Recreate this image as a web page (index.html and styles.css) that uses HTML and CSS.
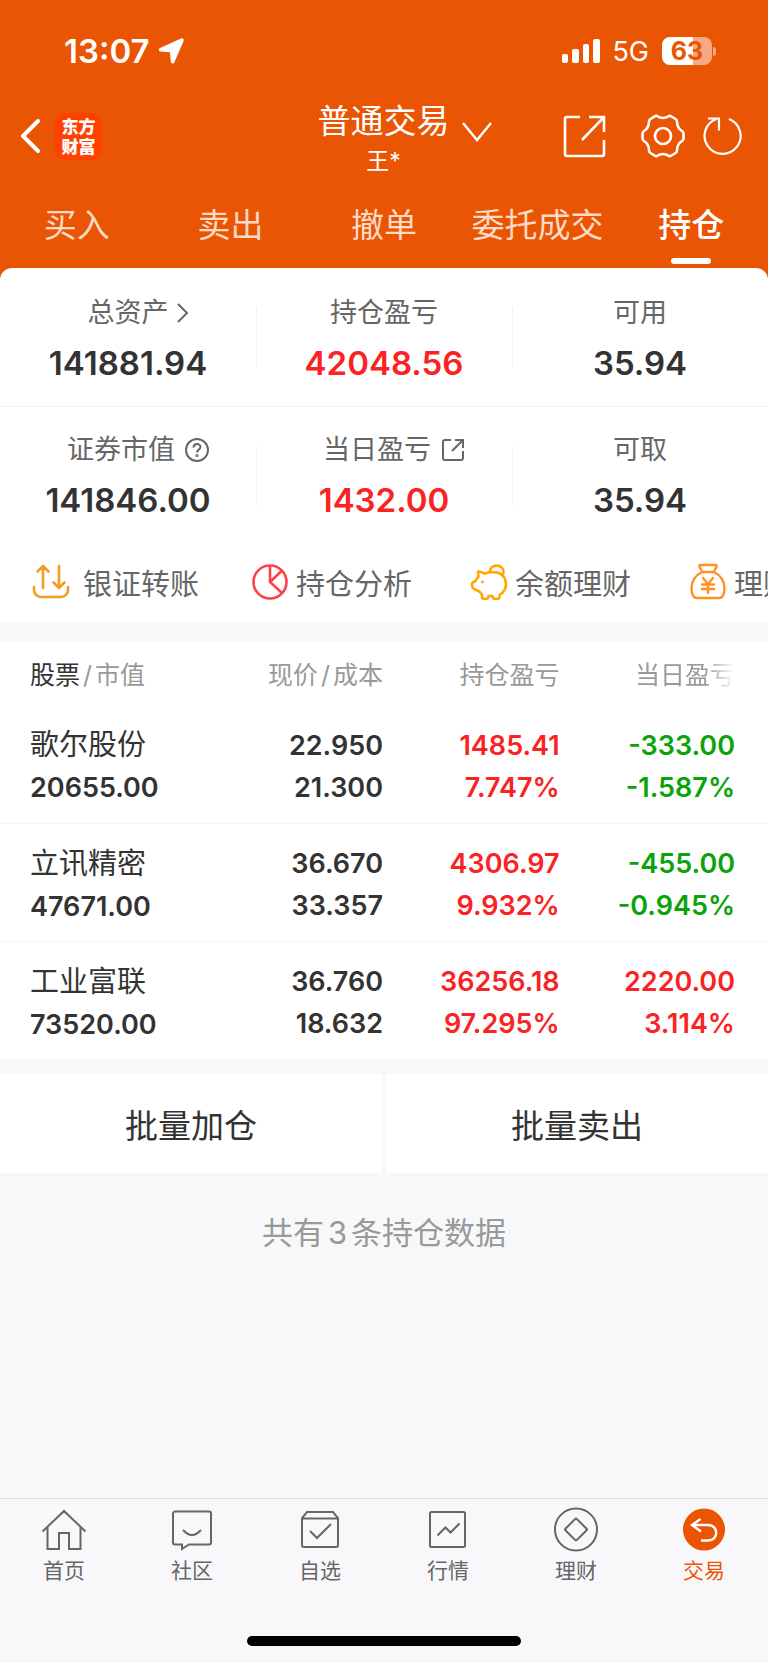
FILE: index.html
```html
<!DOCTYPE html>
<html lang="zh-CN">
<head>
    <meta charset="UTF-8">
    <meta name="viewport" content="width=device-width, initial-scale=1.0">
    <title>普通交易 - 持仓</title>
    <link rel="stylesheet" href="styles.css">
</head>
<body>
    <header class="header">
        <div class="status">
            <span class="status-time">13:07</span>
            <svg class="status-location" width="28" height="28" viewBox="0 0 28 28"><path d="M24 1.500 3 11c-1.800.9-1.400 3.500.7 3.600l8.300.6c.8 0 1 .4 1.100 1l.7 8.400c.2 2.200 2.800 2.500 3.600.6L26.600 4c.7-1.800-.8-3.200-2.600-2.500z" fill="#fff"/></svg>
            <svg class="status-signal" width="40" height="26" viewBox="0 0 40 26" fill="#fff">
                <rect x="1" y="16" width="6" height="9" rx="2"/>
                <rect x="11" y="11" width="7" height="14" rx="2"/>
                <rect x="22" y="6" width="6" height="19" rx="2"/>
                <rect x="32" y="1" width="7" height="24" rx="2"/>
            </svg>
            <span class="status-network">5G</span>
            <span class="battery">63</span>
            <span class="battery-tip"></span>
        </div>

        <div class="titlebar">
            <div class="titlebar-left">
                <button class="icon-button" aria-label="返回">
                    <svg width="22" height="38" viewBox="0 0 22 38"><path d="M18 4 3 19l15 15" fill="none" stroke="#fff" stroke-width="4" stroke-linecap="round" stroke-linejoin="round"/></svg>
                </button>
                <span class="logo">东方<br>财富</span>
            </div>
            <button class="account">
                <span class="account-name">普通交易</span>
                <svg class="account-arrow" width="30" height="20" viewBox="0 0 30 20"><path d="m1 1 14 17L29 1" fill="none" stroke="#fff" stroke-width="2.400"/></svg>
                <span class="account-user">王*</span>
            </button>
            <div class="titlebar-right">
                <button class="icon-button share" aria-label="分享">
                    <svg width="44" height="44" viewBox="0 0 44 44" fill="none" stroke="#fff" stroke-width="2.600"><path d="M18 3H5a2 2 0 0 0-2 2v35a2 2 0 0 0 2 2h35a2 2 0 0 0 2-2V26M27 3h15v15M42 3 20 26"/></svg>
                </button>
                <button class="icon-button" aria-label="设置">
                    <svg width="44" height="44" viewBox="0 0 44 44" fill="none" stroke="#fff" stroke-width="2.600" stroke-linejoin="round"><circle cx="22" cy="22" r="8"/><path d="M13.500 2.500Q15 1.500 16 2q6 4 12 0 1-.5 2.500.5l4 2.500q1.500 1 1.500 2.500 0 6.500 5 9.500 1.500 1 1.500 2.500v5q0 1.500-1.500 2.500-5 3-5 9.500 0 1.500-1.500 2.500l-4 2.500q-1.500 1-2.500.5-6-4-12 0-1 .5-2.500-.5L9.500 39Q8 38 8 36.500 8 30 3 27q-1.500-1-1.500-2.500v-5Q1.500 18 3 17q5-3 5-9.500Q8 6 9.500 5z"/></svg>
                </button>
                <button class="icon-button" aria-label="刷新">
                    <svg width="44" height="44" viewBox="0 0 44 44" fill="none" stroke="#fff" stroke-width="2.200"><path d="M26 5a18 18 0 1 1-12-.300M5 4.500h11v12"/></svg>
                </button>
            </div>
        </div>

        <nav class="tabs">
            <a class="tab" href="#buy">买入</a>
            <a class="tab" href="#sell">卖出</a>
            <a class="tab" href="#cancel">撤单</a>
            <a class="tab" href="#orders">委托成交</a>
            <a class="tab tab-active" href="#positions">持仓</a>
        </nav>
    </header>

    <main>
        <section class="summary">
            <div class="stats">
                <div class="stat">
                    <button class="stat-label stat-link">总资产<svg class="more" width="13" height="20" viewBox="0 0 13 20"><path d="m2 1 9 9-9 9" fill="none" stroke="#666" stroke-width="2"/></svg></button>
                    <span class="stat-value">141881.94</span>
                </div>
                <div class="stat">
                    <span class="stat-label">持仓盈亏</span>
                    <span class="stat-value up">42048.56</span>
                </div>
                <div class="stat">
                    <span class="stat-label">可用</span>
                    <span class="stat-value">35.94</span>
                </div>
            </div>
            <div class="stats">
                <div class="stat">
                    <button class="stat-label stat-link">证券市值<svg width="24" height="24" viewBox="0 0 24 24" fill="none" stroke="#666" stroke-width="2"><circle cx="12" cy="12" r="11"/><path d="M8.500 9.500c0-4.500 7-4.500 7-.5 0 2.500-3.500 2.700-3.500 5.500"/><circle cx="12" cy="17.500" r=".6"/></svg></button>
                    <span class="stat-value">141846.00</span>
                </div>
                <div class="stat">
                    <button class="stat-label stat-link">当日盈亏<svg width="24" height="24" viewBox="0 0 24 24" fill="none" stroke="#666" stroke-width="2"><path d="M10 2H4a2 2 0 0 0-2 2v16a2 2 0 0 0 2 2h16a2 2 0 0 0 2-2v-7M14 2h8v8M22 2 11 13"/></svg></button>
                    <span class="stat-value up">1432.00</span>
                </div>
                <div class="stat">
                    <span class="stat-label">可取</span>
                    <span class="stat-value">35.94</span>
                </div>
            </div>
            <nav class="shortcuts">
                <a class="shortcut shortcut-transfer" href="#transfer">
                    <svg width="38" height="38" viewBox="0 0 38 38" fill="none" stroke="#f59a23" stroke-width="2.600" stroke-linecap="round" stroke-linejoin="round"><path d="M2 24v3a7 7 0 0 0 7 7h20a7 7 0 0 0 7-7v-3M11 25V3M5.500 8.500 11 3l5.500 5.500M27 3v22M21.500 19.500 27 25l5.500-5.500"/></svg>
                    银证转账
                </a>
                <a class="shortcut" href="#analysis">
                    <svg width="38" height="38" viewBox="0 0 38 38" fill="none" stroke="#ff4046" stroke-width="2.600"><circle cx="19" cy="19" r="16.500"/><path d="M19 2.500V19l12 11M19 19 31 7.500"/></svg>
                    持仓分析
                </a>
                <a class="shortcut" href="#balance">
                    <svg width="38" height="38" viewBox="0 0 38 38" fill="none" stroke="#ffa800" stroke-width="2.600" stroke-linejoin="round"><path d="M8 8.500c3-.3 5 1 6.500 2.200 2-1.200 4-1.500 7-1.500h4C32 9.500 36 15 36 21c0 5-2.500 8.500-6.500 11v2c0 1-.6 1.800-2 1.800h-3c-1.500 0-2-1-2-2.800h-4c0 1.800-.5 2.800-2 2.800h-2.500c-1.400 0-2-.8-2-1.800v-2.500l-2.500-3L4 26c-1.500-1-2-2-2-4v-1c0-1 .5-1.500 1.500-2l2-1c.8-1.500 1.500-3 3-4.200z"/><path d="M20 9c0-9 14-8 13.500 0 0 2-.6 3.500-1.700 4.600"/><circle cx="12.500" cy="19" r="1" fill="#ffa800" stroke-width="1"/></svg>
                    余额理财
                </a>
                <a class="shortcut" href="#wealth">
                    <svg width="38" height="38" viewBox="0 0 38 38" fill="none" stroke="#ff9120" stroke-width="2.400" stroke-linecap="round" stroke-linejoin="round"><path d="M11.500 2h15c1 0 1.500.8 1 1.600L25 9c6 3 10.500 9 10.500 16.500 0 2.500-.5 5-1.500 7-.8 1.800-2 2.500-4 2.500H8c-2 0-3.200-.7-4-2.500-1-2-1.500-4.500-1.500-7C2.500 18 7 12 13 9l-2.500-5.400C10 2.800 10.500 2 11.500 2zM13 9h12"/><path d="m14 15 5 6 5-6M13 21.500h12M13 26h12M19 21v9"/></svg>
                    理财产品
                </a>
            </nav>
        </section>

        <table class="positions">
            <thead>
                <tr>
                    <th><b>股票</b><i>/</i>市值</th>
                    <th>现价<i>/</i>成本</th>
                    <th>持仓盈亏</th>
                    <th><span class="fade">当日盈亏</span></th>
                </tr>
            </thead>
            <tbody>
                <tr>
                    <td><span class="stock">歌尔股份</span><br>20655.00</td>
                    <td>22.950<br>21.300</td>
                    <td class="up">1485.41<br>7.747%</td>
                    <td class="down">-333.00<br>-1.587%</td>
                </tr>
                <tr>
                    <td><span class="stock">立讯精密</span><br>47671.00</td>
                    <td>36.670<br>33.357</td>
                    <td class="up">4306.97<br>9.932%</td>
                    <td class="down">-455.00<br>-0.945%</td>
                </tr>
                <tr>
                    <td><span class="stock">工业富联</span><br>73520.00</td>
                    <td>36.760<br>18.632</td>
                    <td class="up">36256.18<br>97.295%</td>
                    <td class="up">2220.00<br>3.114%</td>
                </tr>
            </tbody>
        </table>

        <div class="batch">
            <button class="batch-button">批量加仓</button>
            <button class="batch-button">批量卖出</button>
        </div>

        <p class="count">共有<span class="count-number">3</span>条持仓数据</p>
    </main>

    <footer class="footer">
        <nav class="tabbar">
            <a class="tabbar-item" href="#home">
                <svg width="46" height="46" viewBox="0 0 46 46"><path d="M1.500 24.500 23 4l21.500 20.500M6.500 20v22h11.500V26h10v16h11.500V20"/></svg>
                首页
            </a>
            <a class="tabbar-item" href="#community">
                <svg width="46" height="46" viewBox="0 0 46 46"><path d="M6 4.500h34a2 2 0 0 1 2 2v29a2 2 0 0 1-2 2H20L13 42v-4.500H6a2 2 0 0 1-2-2v-29a2 2 0 0 1 2-2zM14 23q9 10 18 0"/></svg>
                社区
            </a>
            <a class="tabbar-item" href="#watchlist">
                <svg width="46" height="46" viewBox="0 0 46 46"><path d="M5 11.500h36V38a2 2 0 0 1-2 2H7a2 2 0 0 1-2-2V11l5-6h26l5 6v1M13 24l7 7 14-14"/></svg>
                自选
            </a>
            <a class="tabbar-item" href="#quotes">
                <svg width="46" height="46" viewBox="0 0 46 46"><rect x="5" y="5" width="35" height="35" rx="1.500"/><path d="m12.500 28.500 8-8 5 5 9-9"/></svg>
                行情
            </a>
            <a class="tabbar-item" href="#finance">
                <svg width="46" height="46" viewBox="0 0 46 46"><circle cx="23" cy="22.500" r="21"/><rect x="15" y="14.500" width="16" height="16" rx="1" transform="rotate(45 23 22.500)"/></svg>
                理财
            </a>
            <a class="tabbar-item tabbar-active" href="#trade">
                <svg width="46" height="46" viewBox="0 0 46 46"><circle class="disc" cx="23" cy="22.500" r="21"/><path d="M19.500 12 11 18l9 6.500M11 18h16c11 0 11 15.500 0 15.500h-7"/></svg>
                交易
            </a>
        </nav>
        <div class="home-indicator"></div>
    </footer>
</body>
</html>
```

FILE: styles.css
```css
* { box-sizing: border-box; }

body {
    margin: 0;
    min-height: 100vh;
    display: flex;
    flex-direction: column;
    background: #f7f8fa;
    color: #333;
    font-family: "Inter", "Noto Sans CJK SC", sans-serif;
    overflow-x: hidden;
}

main { flex: 1; }

a { color: inherit; text-decoration: none; }

button {
    margin: 0;
    padding: 0;
    border: none;
    background: none;
    color: inherit;
    font: inherit;
    cursor: pointer;
}

svg { display: block; flex: none; }

.up { color: #fa2323; }
.down { color: #0aa30a; }

/* header */
.header {
    padding-bottom: 12px;
    background: #ea5504;
    color: #fff;
}

.status {
    display: flex;
    align-items: center;
    height: 96px;
    padding: 6px 52px 0 64px;
}
.status-time {
    font-size: 33px;
    font-weight: 600;
}
.status-location { margin-left: 7px; }
.status-signal { margin-left: auto; }
.status-network {
    margin: 0 13px 0 11px;
    font-size: 27px;
}
.battery {
    width: 50px;
    height: 28px;
    border-radius: 8px;
    background: linear-gradient(to right, #fff 63%, #f5aa82 63%);
    color: #ea5504;
    font-size: 25px;
    font-weight: 700;
    line-height: 28px;
    text-align: center;
}
.battery-tip {
    width: 3px;
    height: 9px;
    margin-left: 1px;
    border-radius: 0 4px 4px 0;
    background: #f5aa82;
}

.titlebar {
    display: grid;
    grid-template-columns: 1fr auto 1fr;
    grid-template-rows: 80px;
    align-items: center;
    padding: 0 21px 0 20px;
}
.titlebar-left,
.titlebar-right {
    display: flex;
    align-items: center;
}
.titlebar-left { gap: 13px; }
.titlebar-right {
    justify-content: flex-end;
    gap: 18px;
}
.share { margin-right: 17px; }
.logo {
    width: 47px;
    height: 47px;
    padding-top: 3px;
    border-radius: 10px;
    background: #ff4100;
    font-family: "Noto Sans CJK SC", sans-serif;
    font-size: 17px;
    font-weight: 900;
    line-height: 20px;
    text-align: center;
}

.account {
    display: grid;
    grid-template-columns: 30px auto 30px;
    column-gap: 12px;
    align-items: center;
    padding-top: 5px;
}
.account-name {
    grid-column: 2;
    font-size: 33px;
    line-height: 44px;
}
.account-arrow {
    grid-column: 3;
    margin-top: 22px;
}
.account-user {
    grid-column: 2;
    font-size: 23px;
    line-height: 36px;
}

.tabs {
    display: grid;
    grid-template-columns: repeat(5, 1fr);
    padding-top: 25px;
}
.tab {
    height: 67px;
    color: #fddac6;
    font-size: 33px;
    line-height: 48px;
    text-align: center;
}
.tab-active {
    color: #fff;
    font-weight: 500;
}
.tab-active::after {
    content: "";
    display: block;
    width: 40px;
    height: 6px;
    margin: 9px auto 0;
    border-radius: 3px;
    background: #fff;
}

/* account summary */
.summary {
    margin-top: -12px;
    border-radius: 12px 12px 0 0;
    background: #fff;
    overflow: hidden;
}
.stats {
    display: grid;
    grid-template-columns: repeat(3, 1fr);
    height: 138px;
}
.stats + .stats { border-top: 1px solid #f2f2f2; }
.stat {
    display: flex;
    flex-direction: column;
    align-items: center;
    padding-top: 27px;
}
.stats + .stats .stat { padding-top: 25px; }
.stat + .stat { background: linear-gradient(#f2f2f2, #f2f2f2) no-repeat left 39px / 1px 60px; }
.stat-label {
    display: flex;
    align-items: center;
    gap: 10px;
    color: #666;
    font-size: 27px;
    line-height: 36px;
}
.stat-link { padding-left: 20px; }
.more { margin-left: -3px; }
.stat-value {
    margin-top: 12px;
    font-size: 33px;
    font-weight: 600;
    line-height: 40px;
}

.shortcuts {
    display: flex;
    height: 78px;
    padding: 0 0 2px 32px;
    overflow: hidden;
}
.shortcut {
    display: flex;
    flex: 0 0 219px;
    align-items: center;
    gap: 7px;
    color: #666;
    font-size: 29px;
    white-space: nowrap;
}
.shortcut-transfer { gap: 13px; }

/* positions */
.positions {
    width: 100%;
    margin-top: 20px;
    border-collapse: collapse;
    table-layout: fixed;
    background: #fff;
}
.positions th,
.positions td {
    padding: 0 1px 0 0;
    text-align: right;
}
.positions th {
    width: 23%;
    height: 63px;
    padding-bottom: 1px;
    color: #999;
    font-size: 25px;
    font-weight: 400;
}
.positions th:first-child { width: 26%; }
.positions th:last-child { width: 27%; }
.positions th:nth-child(2) { width: 24%; }
.positions th b {
    color: #333;
    font-weight: 400;
}
.positions th i {
    margin: 0 3px;
    font-style: normal;
}
.positions td {
    height: 118px;
    padding-top: 6px;
    font-size: 27px;
    font-weight: 600;
    line-height: 42px;
}
.positions tbody tr + tr { border-top: 1px solid #f5f5f5; }
.positions th:first-child,
.positions td:first-child {
    padding-left: 30px;
    text-align: left;
}
.positions th:last-child,
.positions td:last-child { padding-right: 33px; }
.stock {
    font-size: 29px;
    font-weight: 400;
}
.fade {
    -webkit-mask-image: linear-gradient(to right, #000 70%, transparent);
    mask-image: linear-gradient(to right, #000 70%, transparent);
}

.batch {
    display: grid;
    grid-template-columns: 1fr 1fr;
    gap: 4px;
    margin-top: 15px;
}
.batch-button {
    height: 99px;
    background: #fff;
    font-size: 33px;
}

.count {
    margin: 36px 0;
    color: #999;
    font-size: 31px;
    line-height: 48px;
    text-align: center;
}
.count-number { margin: 0 4px; }

/* bottom bar */
.footer {
    height: 165px;
    border-top: 1px solid #e2e2e4;
    background: #f8f8fb;
}
.tabbar {
    display: grid;
    grid-template-columns: repeat(6, 1fr);
    padding-top: 8px;
}
.tabbar-item {
    display: flex;
    flex-direction: column;
    align-items: center;
    gap: 3px;
    color: #666;
    font-size: 21px;
    line-height: 30px;
}
.tabbar-item path,
.tabbar-item rect,
.tabbar-item circle {
    fill: none;
    stroke: #666;
    stroke-width: 2;
}
.tabbar-active { color: #ea5504; }
.tabbar-active path {
    stroke: #fff;
    stroke-width: 2.4;
}
.tabbar-active .disc {
    fill: #ea5504;
    stroke: none;
}
.home-indicator {
    width: 274px;
    height: 10px;
    margin: 50px auto 0;
    border-radius: 5px;
    background: #000;
}
```
